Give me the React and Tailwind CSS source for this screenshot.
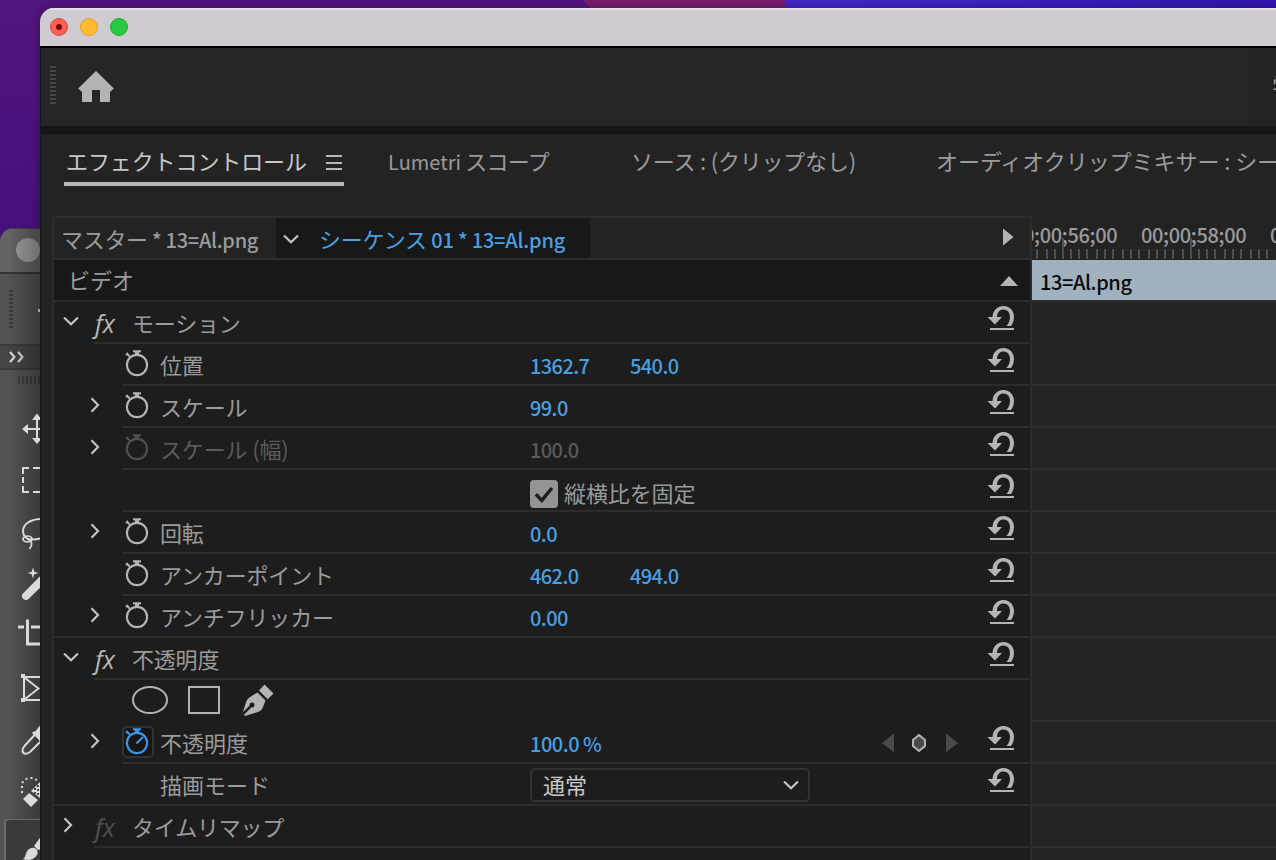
import React from "react";

const rulerTicks = [
  4, 14, 22, 30, 38, 46, 54, 64, 72, 80, 90, 98, 106, 116, 124, 132, 140, 150, 158, 166, 174, 182, 192, 200, 208, 218,
  226, 234,
];

const motionProps = [
  { label: "位置", stopwatch: true, values: ["1362.7", "540.0"] },
  { label: "スケール", chevron: true, stopwatch: true, values: ["99.0"] },
  { label: "スケール (幅)", chevron: true, stopwatch: true, values: ["100.0"], disabled: true },
  { checkbox: "縦横比を固定" },
  { label: "回転", chevron: true, stopwatch: true, values: ["0.0"] },
  { label: "アンカーポイント", stopwatch: true, values: ["462.0", "494.0"] },
  { label: "アンチフリッカー", chevron: true, stopwatch: true, values: ["0.00"], last: true },
];

const ChevronRight = ({ className }) => (
  <svg className={className} width="10" height="16" viewBox="0 0 10 16" fill="none" stroke="#c4c4c4" strokeWidth="2.2">
    <path d="M1.5 1.2 L8 8 L1.5 14.8" />
  </svg>
);

const ChevronDown = ({ className }) => (
  <svg className={className} width="16" height="10" viewBox="0 0 16 10" fill="none" stroke="#c4c4c4" strokeWidth="2.2">
    <path d="M1 1.5 L8 8.2 L15 1.5" />
  </svg>
);

const ResetIcon = () => (
  <svg className="mt-[2px]" width="28" height="28" viewBox="0 0 28 28" fill="#b4b4b4">
    <path d="M0.5 13 H5.5 C6 6 10.5 2 16.5 2 C23 2 27 7 27 13 C27 17 25.5 20 24 22 H19.3 C21.7 20 23 16.5 23 13 C23 8.5 20.5 5.5 16.5 5.5 C13 5.5 10 8 10 13 H15 L8 20.4 Z" />
    <rect x="3" y="24" width="24" height="2" />
  </svg>
);

const Stopwatch = ({ color, active }) => (
  <svg width="28" height="28" viewBox="0 0 28 28" fill="none" stroke={color} strokeWidth="2.1">
    <circle cx="14" cy="15" r="10.1" />
    <path d="M10 1.3 H18" />
    <path d="M14 2 V5" strokeWidth="4" />
    <path d="M3 5 L5 3 M4.2 4 L6.8 6.6" strokeWidth="2" />
    {active && <path d="M13.4 15.6 L20 9" />}
  </svg>
);

const Fx = ({ dim }) => (
  <span
    className={
      "h-[42px] pl-px text-[25px] leading-[42px] italic font-['Open_Sans'] " +
      (dim ? "text-[#4f4f4f]" : "text-[#b8b8b8]")
    }
  >
    fx
  </span>
);

const EffectRow = ({ label, open, dim }) => (
  <div className="flex h-[42px]">
    <div className="w-10 shrink-0">
      {open ? <ChevronDown className="ml-[9px] mt-[14px]" /> : <ChevronRight className="ml-[9px] mt-[11px]" />}
    </div>
    <div className="grid flex-1 grid-cols-[38px_1fr_43px] border-b-2 border-[#2c2c2c]">
      <Fx dim={dim} />
      <span className="whitespace-nowrap leading-[40px] tracking-[-0.2px]">{label}</span>
      {!dim && <ResetIcon />}
    </div>
  </div>
);

const PropertyRow = ({ label, chevron, stopwatch, values = [], disabled, checkbox, last }) => (
  <div className={"flex h-[42px] " + (last ? "border-b-2 border-[#2c2c2c]" : "")}>
    <div className="w-[68px] shrink-0">{chevron && <ChevronRight className="ml-[36px] mt-[11px]" />}</div>
    <div
      className={
        "grid flex-1 grid-cols-[38px_370px_100px_1fr_43px] " + (last ? "" : "border-b-2 border-[#2c2c2c]")
      }
    >
      <div className="pl-px pt-[6px]">{stopwatch && <Stopwatch color={disabled ? "#4f4f4f" : "#b4b4b4"} />}</div>
      <span className={"whitespace-nowrap leading-[41px] tracking-[-0.15px] " + (disabled ? "text-[#5a5a5a]" : "")}>
        {label}
      </span>
      {checkbox ? (
        <div className="col-span-2 flex gap-[6px]">
          <div className="mt-[10px] h-7 w-7 rounded-[4px] bg-[#949494]">
            <svg width="28" height="28" viewBox="0 0 28 28" fill="none" stroke="#1d1d1d" strokeWidth="3.4">
              <path d="M5.8 14.2 L11.8 20.4 L22 8" />
            </svg>
          </div>
          <span className="leading-[44px] tracking-[-0.1px]">{checkbox}</span>
        </div>
      ) : (
        <>
          {[0, 1].map((i) => (
            <span
              key={i}
              className={
                "text-[20px] leading-[44px] font-medium tracking-[-0.6px] " +
                (disabled ? "text-[#5a5a5a]" : "text-[#4a9fe0]")
              }
            >
              {values[i]}
            </span>
          ))}
        </>
      )}
      <ResetIcon />
    </div>
  </div>
);

const ToolCell = ({ children }) => (
  <svg
    className="block shrink-0"
    width="40"
    height="52"
    viewBox="0 0 40 52"
    fill="none"
    stroke="#dadada"
    strokeWidth="2"
  >
    {children}
  </svg>
);

const ToolStrip = () => (
  <div className="relative mt-[228px] flex h-[632px] w-10 shrink-0 flex-col overflow-hidden rounded-tl-[14px] bg-[#535353]">
    <div className="h-[46px] shrink-0 border-b-2 border-t border-b-[#343434] border-t-[#444] bg-[#636363]">
      <div className="ml-4 mt-[9px] h-6 w-6 rounded-full bg-[#9c9c9c]" />
    </div>
    <div className="flex h-[72px] shrink-0 justify-between border-b-2 border-[#3b3b3b] pt-4">
      <div className="ml-[9px] h-[38px] w-1 bg-[repeating-linear-gradient(#3d3d3d_0_2px,transparent_2px_4px)]" />
      <div className="mt-[19px] h-[3px] w-[2px] bg-[#e0e0e0]" />
    </div>
    <div className="h-6 shrink-0 border-b-2 border-[#3b3b3b] bg-[#454545]">
      <svg className="ml-[9px] mt-[5px]" width="16" height="12" viewBox="0 0 16 12" fill="none" stroke="#e0e0e0" strokeWidth="2">
        <path d="M1 1 L5.5 6 L1 11 M9 1 L13.5 6 L9 11" />
      </svg>
    </div>
    <div className="ml-[18px] mt-[6px] h-2 shrink-0 bg-[repeating-linear-gradient(90deg,#3d3d3d_0_2px,transparent_2px_4px)]" />
    <div className="absolute inset-0 bg-gradient-to-r from-transparent from-20% to-black/30" />
    <div className="relative mt-[19px] flex flex-col">
      <ToolCell>
        <path d="M26 26 H40 M37 14 V38" />
        <path d="M22 26 L28 21 V31 Z M37 10.5 L32 17 H42 Z M37 41 L32 35 H42 Z" fill="#dadada" stroke="none" />
      </ToolCell>
      <ToolCell>
        <path d="M23 19 V13 H29 M33 13 H40 M23 22 V28 M23 31 V37 H29 M33 37 H40" />
      </ToolCell>
      <ToolCell>
        <path d="M40 12 C30 12.5 23 17.5 23 24 C23 27 24 29 25.5 30.5 C29 33 35 32.8 40 31.5" />
        <ellipse cx="27.5" cy="32" rx="4.5" ry="3" strokeWidth="1.7" />
        <path d="M27 32 C33 34 32.5 38 29.5 42" strokeWidth="1.8" />
      </ToolCell>
      <ToolCell>
        <path d="M33 8.5 L34.3 12.7 L38.5 14 L34.3 15.3 L33 19.5 L31.7 15.3 L27.5 14 L31.7 12.7 Z" fill="#dadada" stroke="none" />
        <path d="M26 37 L44 19" strokeWidth="8" strokeLinecap="round" />
      </ToolCell>
      <ToolCell>
        <path d="M27.5 8.5 V33 H40 M18 16 H24 M31 16 H40" strokeWidth="3" />
      </ToolCell>
      <ToolCell>
        <path d="M24 14 V37 M23 14 H40 M23 37 H40 M25 15 L38.5 25.5 L25 36" />
        <path d="M21 11 H25 V15 H21 Z M21 35 H25 V39 H21 Z" fill="#dadada" stroke="none" />
      </ToolCell>
      <ToolCell>
        <path d="M35 19.5 L24.5 31 C20 37 24 41 30 37 L40 27" />
        <path d="M33 17 L43 27 M36 18 L40 13 V24 Z" fill="#dadada" strokeWidth="3" />
      </ToolCell>
      <ToolCell>
        <path d="M22 26 V17 C23 13 27 11 31 11 C35 11 37 13 38 16" strokeDasharray="2 3" />
        <path d="M29 26 L23 32 L31 40 L38 33 Z M31 24 L40 15 V31 Z" fill="#dadada" stroke="none" />
        <path d="M34 22 h2 M37 19 h2 M34 26 h2 M37 23 h2 M37 27 h2" stroke="#444" />
      </ToolCell>
      <ToolCell>
        <rect x="5" y="0" width="50" height="60" rx="4" fill="#3a3a3a" stroke="#6c6c6c" />
        <path d="M23 40 C27 38 24 32 31 29 C36 28 39 32 37 36 C34 41 28 42 23 40 Z M34 27 L42 16 V30 L38 31 Z" fill="#dadada" stroke="none" />
      </ToolCell>
    </div>
  </div>
);

const TitleBar = () => (
  <div className="flex h-10 shrink-0 gap-3 border-b-2 border-t-2 border-b-black border-t-[#e2dfe6] bg-[#cfcbd0] pl-[10px] pt-2">
    <div className="flex h-[18px] w-[18px] items-center justify-center rounded-full border border-[#e2463f] bg-[#fe5f57]">
      <div className="h-[6px] w-[6px] rounded-full bg-[#7c0a06]" />
    </div>
    <div className="h-[18px] w-[18px] rounded-full border border-[#e0a123] bg-[#febc2e]" />
    <div className="h-[18px] w-[18px] rounded-full border border-[#1dad2b] bg-[#28c840]" />
  </div>
);

const Toolbar = () => (
  <div className="flex h-[86px] shrink-0 border-b-8 border-[#161616] bg-[#262626]">
    <div className="ml-[9px] mt-[18px] h-[38px] w-[6px] bg-[repeating-linear-gradient(#464646_0_2px,transparent_2px_4px)]" />
    <svg className="ml-[22px] mt-[22px]" width="36" height="34" viewBox="0 0 36 34" fill="#b4b4b4">
      <path d="M18 1 L35.8 18.5 L32 22 V32 H22 V20 H14 V32 H4 V22 L0.2 18.5 Z" />
    </svg>
    <div className="ml-auto w-[28px] overflow-hidden bg-[#232323] pl-[24px]">
      <span className="whitespace-nowrap leading-[73px] text-[#9b9b9b]">学習</span>
    </div>
  </div>
);

const PanelTabs = () => (
  <div className="flex h-[82px] shrink-0 whitespace-nowrap pl-[23px] leading-[53px] text-[#9b9b9b]">
    <div className="h-[52px] w-[280px] shrink-0 border-b-4 border-[#b9b9b9] pl-[2px] text-[#c8c8c8]">
      <div className="flex">
        <span className="w-[260px] tracking-[-0.1px]">エフェクトコントロール</span>
        <div className="mt-[21px] flex h-[15px] w-4 flex-col justify-between">
          <div className="h-[2px] bg-[#b9b9b9]" />
          <div className="h-[2px] bg-[#b9b9b9]" />
          <div className="h-[2px] bg-[#b9b9b9]" />
        </div>
      </div>
    </div>
    <span className="ml-11 w-[243px] shrink-0 tracking-[-0.7px]">
      <span className="text-[20px] tracking-[0px]">Lumetri</span> スコープ
    </span>
    <span className="w-[305px] shrink-0 tracking-[-0.2px]">ソース : (クリップなし)</span>
    <span className="tracking-[-0.05px]">オーディオクリップミキサー : シーケンス 01</span>
  </div>
);

const EffectList = () => (
  <div className="w-[980px] shrink-0 border-x-2 border-t-2 border-[#2c2c2c] bg-[#1d1d1d]">
    <div className="flex h-[42px] border-b-2 border-[#2c2c2c] bg-[#232323] leading-[41px]">
      <span className="w-[222px] pl-[7px] tracking-[-0.3px]">
        マスター<span className="text-[20px] font-medium"> * 13=Al.png</span>
      </span>
      <div className="flex w-[314px] bg-[#181818] text-[#4a9fe0]">
        <ChevronDown className="ml-[7px] mt-4" />
        <span className="ml-5 tracking-[-0.2px]">
          シーケンス<span className="text-[20px] font-medium"> 01 * 13=Al.png</span>
        </span>
      </div>
      <svg className="ml-auto mr-[16px] mt-[10px]" width="12" height="18" viewBox="0 0 12 18" fill="#b4b4b4">
        <path d="M1 0.5 L11.5 9 L1 17.5 Z" />
      </svg>
    </div>
    <div className="flex h-[42px] justify-between border-b-2 border-[#2c2c2c] bg-[#181818] pl-[14px] leading-[39px]">
      <span>ビデオ</span>
      <svg className="mr-[12px] mt-4" width="18" height="10" viewBox="0 0 18 10" fill="#b4b4b4">
        <path d="M0 10 L9 0 L18 10 Z" />
      </svg>
    </div>

    <EffectRow label="モーション" open />
    {motionProps.map((prop, i) => (
      <PropertyRow key={i} {...prop} />
    ))}

    <EffectRow label="不透明度" open />
    <div className="flex h-[42px] pl-[77px] pt-[5px]">
      <svg width="38" height="30" viewBox="0 0 38 30" fill="none" stroke="#b4b4b4" strokeWidth="2">
        <ellipse cx="19" cy="15" rx="17" ry="13" />
      </svg>
      <div className="ml-[19px] mt-px h-7 w-8 border-2 border-[#b4b4b4]" />
      <svg className="ml-[21px] -mt-px" width="34" height="34" viewBox="0 0 34 34" fill="#b4b4b4">
        <path d="M1 31 L5.5 17 C6 15.5 8 13.5 11 11.7 L16.5 8.5 L24.5 16.5 L22 23 C21 26 19 27 17.5 27.8 L4 32 L3 30.8 L10.5 23.3 A2.4 2.4 0 1 0 8.7 21.5 L1.6 28.6 Z" />
        <path d="M18 6.5 L23.5 0.6 L32.5 9.6 L26.7 15.3 Z" />
      </svg>
    </div>
    <div className="flex h-[42px]">
      <div className="w-[68px] shrink-0">
        <ChevronRight className="ml-[36px] mt-[11px]" />
      </div>
      <div className="grid flex-1 grid-cols-[38px_370px_351px_106px_43px] border-b-2 border-[#2c2c2c]">
        <div className="mt-1 h-8 w-8 rounded-[5px] border-2 border-[#333] bg-[#161616]">
          <div className="-ml-px">
            <Stopwatch color="#3f94e6" active />
          </div>
        </div>
        <span className="leading-[40px]">不透明度</span>
        <span className="text-[20px] leading-[44px] font-medium tracking-[-0.5px] text-[#4a9fe0]">100.0 %</span>
        <svg className="mt-[11px]" width="80" height="20" viewBox="0 0 80 20">
          <path d="M1 10 L13 0.5 V19.5 Z M77 10 L65 0.5 V19.5 Z" fill="#4a4a4a" />
          <path d="M38 2 L44 7 V13 L38 18 L32 13 V7 Z" fill="#4a4a4a" stroke="#b4b4b4" strokeWidth="2" />
        </svg>
        <ResetIcon />
      </div>
    </div>
    <div className="flex h-[42px] border-b-2 border-[#2c2c2c] pl-[106px]">
      <span className="w-[370px] leading-[40px]">描画モード</span>
      <div className="mt-1 flex h-[34px] w-[280px] justify-between rounded-[5px] border-2 border-[#323232] pl-[11px] pr-[9px] leading-[29px] text-[#c8c8c8]">
        <span>通常</span>
        <ChevronDown className="mt-[10px]" />
      </div>
      <div className="ml-auto w-[43px]">
        <ResetIcon />
      </div>
    </div>
    <EffectRow label="タイムリマップ" dim />
  </div>
);

const Timeline = () => (
  <div className="min-w-0 flex-1 overflow-hidden bg-[#232323]">
    <div className="relative h-11 overflow-hidden">
      <div className="-ml-5 flex w-[400px] pt-[4px] text-[20px] leading-[29px] font-medium tracking-[-0.35px] text-[#9b9b9b]">
        <span className="w-[129px]">00;00;56;00</span>
        <span className="w-[129px]">00;00;58;00</span>
        <span>00;01;00;02</span>
      </div>
      <svg className="absolute bottom-0 left-0" width="244" height="24" viewBox="0 0 244 24" fill="#4f4f4f">
        {rulerTicks.map((x) => (
          <rect key={x} x={x} y={x === 30 || x === 158 ? 2 : 13} width="2" height={x === 30 || x === 158 ? 21 : 10} />
        ))}
      </svg>
    </div>
    <div className="h-10 bg-[#a1b1bd] pl-2 text-[20px] leading-[44px] font-medium tracking-[-0.4px] text-[#0a0a0a]">
      13=Al.png
    </div>
    <div className="h-[86px] border-y-2 border-[#2c2c2c]" />
    {[42, 42, 42, 42, 42, 42, 84, 42, 42, 42].map((h, i) => (
      <div key={i} className="border-b-2 border-[#2c2c2c]" style={{ height: h }} />
    ))}
  </div>
);

const Wallpaper = () => (
  <svg className="absolute inset-0" width="1276" height="860" viewBox="0 0 1276 860">
    <defs>
      <linearGradient id="purple" x1="0" y1="0" x2="0" y2="1">
        <stop offset="0" stopColor="#53157e" />
        <stop offset="0.3" stopColor="#440f7c" />
      </linearGradient>
      <linearGradient id="blue" x1="0" y1="0" x2="1" y2="0">
        <stop offset="0" stopColor="#422bc6" />
        <stop offset="1" stopColor="#3514b0" />
      </linearGradient>
    </defs>
    <rect width="1276" height="860" fill="url(#purple)" />
    <path d="M583 0 H784 L788 10 H592 Z" fill="#781d6e" />
    <path d="M784 0 H1276 V10 H788 Z" fill="url(#blue)" />
  </svg>
);

export default function App() {
  return (
    <div className="relative h-[860px] w-[1276px] overflow-hidden font-['Noto_Sans_CJK_JP',sans-serif] text-[22px] text-[#9b9b9b]">
      <Wallpaper />
      <div className="relative flex h-full">
        <ToolStrip />
        <div className="mt-2 flex min-w-0 flex-1 flex-col overflow-hidden rounded-tl-[14px] bg-[#232323] shadow-[0_0_8px_rgba(0,0,0,0.35)]">
          <TitleBar />
          <div className="flex min-h-0 flex-1 flex-col border-l border-[#161616]">
            <Toolbar />
            <PanelTabs />
            <div className="flex min-h-0 flex-1 pl-[11px]">
              <EffectList />
              <Timeline />
            </div>
          </div>
        </div>
      </div>
    </div>
  );
}
